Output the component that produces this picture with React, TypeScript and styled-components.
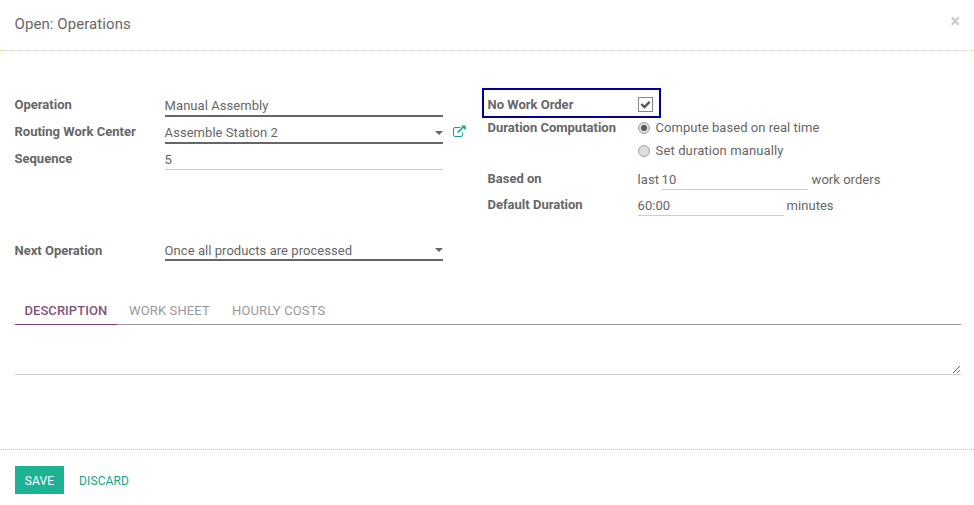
import React from "react";
import styled, { createGlobalStyle, css } from "styled-components";

const Global = createGlobalStyle`
  * { box-sizing: border-box; }
  body { margin: 0; background: #fff; color: #666; font: 13px/20px Roboto, sans-serif; overflow: hidden; }
`;

const Dialog = styled.div`
  width: 974px;
  height: 505px;
  display: flex;
  flex-direction: column;
`;

const Header = styled.header`
  height: 51px;
  flex: none;
  display: flex;
  justify-content: space-between;
  align-items: flex-start;
  padding: 14px 13px 0 14.5px;
  border-bottom: 1px dotted #dede66;
`;

const Title = styled.h1`
  margin: 0;
  font-size: 15px;
  line-height: 20px;
  font-weight: 400;
  letter-spacing: 0.08px;
`;

const Close = styled.button`
  width: 11px;
  height: 20px;
  padding: 2px 0 0;
  border: 0;
  background: none;
  display: flex;
`;

const Body = styled.main`
  flex: 1;
  padding: 37px 13px 0 15px;
`;

const Columns = styled.div`
  display: flex;
  gap: 45px;
  height: 202px;
`;

const Column = styled.section<{ $width: number }>`
  width: ${(p) => p.$width}px;
`;

const Row = styled.div<{ $height: number; $gap?: number }>`
  display: grid;
  grid-template-columns: 150px 1fr;
  height: ${(p) => p.$height}px;
  margin-top: ${(p) => p.$gap ?? 0}px;
`;

const Label = styled.label<{ $top?: number }>`
  font-weight: 700;
  padding-top: ${(p) => p.$top ?? 0}px;
  margin-left: -0.5px;
`;

const underline = css<{ $strong?: boolean }>`
  border-bottom: ${(p) => (p.$strong ? "2px solid #666" : "1px solid #ccc")};
`;

const Field = styled.div<{ $strong?: boolean; $height: number; $line?: number }>`
  ${underline}
  width: 278px;
  height: ${(p) => p.$height}px;
  display: flex;
  justify-content: space-between;
  align-items: flex-end;
  line-height: ${(p) => p.$line ?? 19}px;
  letter-spacing: 0.05px;
  text-indent: -0.4px;
`;

const FieldLine = styled.div`
  display: flex;
  align-items: flex-start;
  gap: 9px;
`;

const Caret = styled.span`
  border: 4px solid transparent;
  border-top-color: #666;
  border-bottom: 0;
  margin-bottom: 7px;
`;

const External = styled.svg`
  flex: none;
  margin-top: 10px;
`;

const Highlight = styled.div`
  width: 179px;
  height: 30px;
  margin: 0 0 0 -6px;
  padding: 4px 0 0 4px;
  border: 2px solid #00009a;
`;

const Check = styled.span`
  width: 15px;
  height: 15px;
  margin-top: 3px;
  border: 1px solid #888;
  display: block;

  svg {
    display: block;
  }
`;

const Options = styled.div`
  display: flex;
  flex-direction: column;
  gap: 3px;
`;

const Option = styled.label<{ $spacing: number }>`
  display: flex;
  align-items: center;
  gap: 5.6px;
  height: 20px;
  letter-spacing: ${(p) => p.$spacing}px;
`;

const Radio = styled.span`
  width: 12px;
  height: 12px;
  margin-top: -1px;
  border: 1px solid #a2a2a2;
  border-radius: 50%;
  background: #dedede;
  display: grid;
  place-items: center;
`;

const Dot = styled.span`
  width: 6px;
  height: 6px;
  border-radius: 50%;
  background: #595959;
`;

const Inline = styled.div`
  display: flex;
  gap: 4px;
  line-height: 22px;
  text-indent: -0.4px;
  letter-spacing: 0.03px;
`;

const LastWord = styled.span`
  width: 20px;
`;

const SmallField = styled.span<{ $indent?: boolean }>`
  ${underline}
  width: 146px;
  height: 21px;
  margin-right: ${(p) => (p.$indent ? 0 : -1)}px;
`;

const Tabs = styled.nav`
  display: flex;
  height: 35px;
  border-bottom: 1px solid #999;
`;

const Tab = styled.a<{ $active?: boolean; $width: number }>`
  width: ${(p) => p.$width}px;
  height: 35px;
  padding: 11px 0 0 ${(p) => (p.$active ? 9.5 : 12)}px;
  line-height: 20px;
  letter-spacing: ${(p) => (p.$active ? 0.05 : 0.14)}px;
  font-weight: ${(p) => (p.$active ? 500 : 400)};
  color: ${(p) => (p.$active ? "#7f5378" : "#999")};
  border-bottom: ${(p) => (p.$active ? "1px solid #7c3f73" : "0")};
`;

const Notes = styled.div`
  height: 50px;
  border-bottom: 1px solid #ccc;
  display: flex;
  justify-content: flex-end;
  align-items: flex-end;
`;

const Footer = styled.footer`
  height: 56px;
  flex: none;
  display: flex;
  padding: 16px 15px 0;
  border-top: 1px dotted #cfcf9d;
`;

const Button = styled.button<{ $primary?: boolean }>`
  width: ${(p) => (p.$primary ? 49 : 80)}px;
  height: 28px;
  padding: 2px 0 0;
  border: 0;
  font: 400 12px/26px Roboto, sans-serif;
  letter-spacing: 0.1px;
  color: ${(p) => (p.$primary ? "#fff" : "#12a58d")};
  background: ${(p) => (p.$primary ? "#1cb294" : "transparent")};
`;

export default function App() {
  return (
    <Dialog>
      <Global />
      <Header>
        <Title>Open: Operations</Title>
        <Close aria-label="Close">
          <svg width="10" height="10" viewBox="0 0 10 10">
            <path d="M1.8 1.3 8.7 8.7M8.7 1.3 1.8 8.7" stroke="#c9c9c9" strokeWidth="2" />
          </svg>
        </Close>
      </Header>
      <Body>
        <Columns>
          <Column $width={428}>
            <Row $height={27}>
              <Label $top={7}>Operation</Label>
              <Field $strong $height={29}>Manual Assembly</Field>
            </Row>
            <Row $height={27}>
              <Label $top={7}>Routing Work Center</Label>
              <FieldLine>
                <Field $strong $height={29}>Assemble Station 2<Caret /></Field>
                <External width="15" height="13" viewBox="0 0 15 13" fill="none" stroke="#10a59a">
                  <path d="M8.5 2.5H3A1.8 1.8 0 0 0 1.5 4v6A1.8 1.8 0 0 0 3 11.5h6A1.8 1.8 0 0 0 10.7 10V7.5" />
                  <path d="m5.7 7.5 6-6" strokeWidth="1.7" />
                  <path d="M9 .5h4.7v4.7z" fill="#10a59a" stroke="none" />
                </External>
              </FieldLine>
            </Row>
            <Row $height={27}>
              <Label $top={7}>Sequence</Label>
              <Field $height={28}>5</Field>
            </Row>
            <Row $height={27} $gap={65}>
              <Label $top={7}>Next Operation</Label>
              <Field $strong $height={27} $line={17}>Once all products are processed<Caret /></Field>
            </Row>
          </Column>
          <Column $width={473}>
            <Highlight>
              <Row $height={22}>
                <Label $top={1}>No Work Order</Label>
                <Check>
                  <svg width="13" height="13" viewBox="0 0 13 13" fill="none">
                    <path d="m2.3 6 3.1 3.1 5.2-5.2" stroke="#555" strokeWidth="2.4" />
                  </svg>
                </Check>
              </Row>
            </Highlight>
            <Row $height={51}>
              <Label>Duration Computation</Label>
              <Options>
                <Option $spacing={0.04}><Radio><Dot /></Radio>Compute based on real time</Option>
                <Option $spacing={0.12}><Radio />Set duration manually</Option>
              </Options>
            </Row>
            <Row $height={26}>
              <Label>Based on</Label>
              <Inline><LastWord>last</LastWord><SmallField $indent>10</SmallField> work orders</Inline>
            </Row>
            <Row $height={26}>
              <Label>Default Duration</Label>
              <Inline><SmallField>60:00</SmallField> minutes</Inline>
            </Row>
          </Column>
        </Columns>
        <Tabs>
          <Tab $active $width={102}>DESCRIPTION</Tab>
          <Tab $width={103}>WORK SHEET</Tab>
          <Tab $width={120}>HOURLY COSTS</Tab>
        </Tabs>
        <Notes>
          <svg width="9" height="9" viewBox="0 0 9 9">
            <path d="m1 8 7-7M5 8l3-3" stroke="#666" />
          </svg>
        </Notes>
      </Body>
      <Footer>
        <Button $primary>SAVE</Button>
        <Button>DISCARD</Button>
      </Footer>
    </Dialog>
  );
}
